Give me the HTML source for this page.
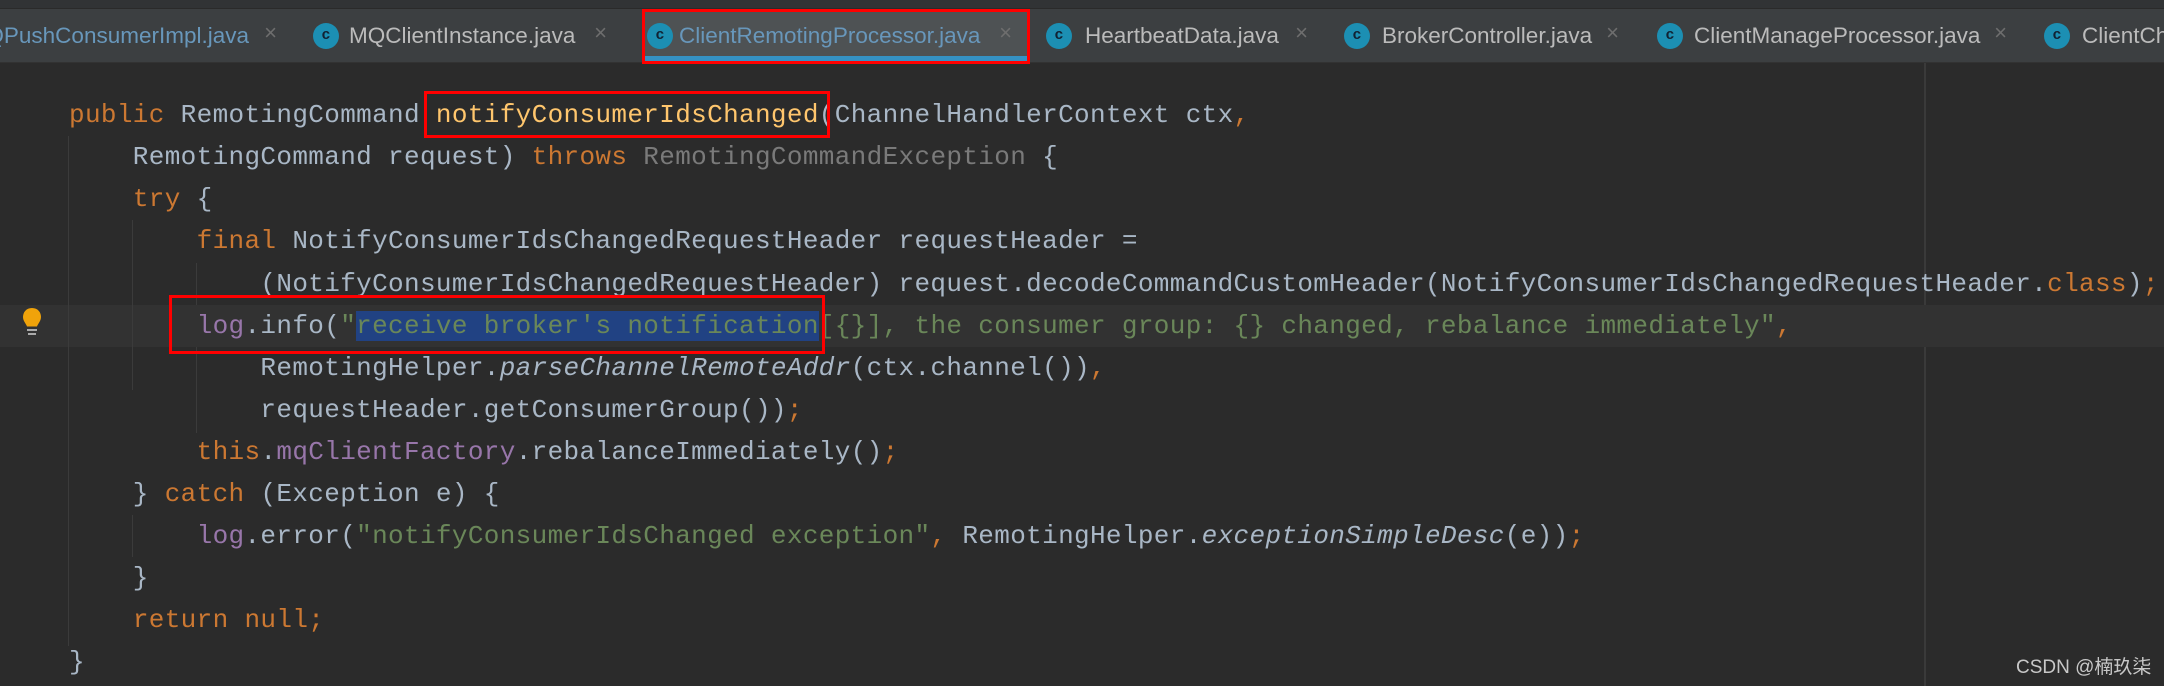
<!DOCTYPE html>
<html><head><meta charset="utf-8"><style>
html,body{margin:0;padding:0;}
body{width:2164px;height:686px;background:#2b2b2b;position:relative;overflow:hidden;font-family:"Liberation Mono",monospace;}
.top{position:absolute;left:0;top:0;width:2164px;height:8px;background:#313335;border-bottom:1px solid #2a2a2a;}
.tabs{position:absolute;left:0;top:9px;width:2164px;height:53px;background:#3c3f41;border-bottom:1px solid #323232;}
.tab{position:absolute;top:0;height:53px;font-family:"Liberation Sans",sans-serif;font-size:22.5px;color:#bbbbbb;line-height:53px;white-space:nowrap;}
.ic{position:absolute;top:14px;width:26px;height:26px;border-radius:50%;background:#1c8fb3;color:#123;font-size:15px;line-height:26px;text-align:center;font-weight:bold;}
.x{position:absolute;color:#6e6e6e;font-size:22px;}
.active{position:absolute;left:642px;top:9px;width:386px;height:53px;background:#4e5254;}
.uline{position:absolute;left:642px;top:56px;width:386px;height:6px;background:#3592c4;}
.line{position:absolute;left:69px;height:42px;line-height:42px;font-size:26px;letter-spacing:0.35px;color:#a9b7c6;white-space:pre;}
.k{color:#cc7832}.m{color:#ffc66d}.s{color:#6a8759}.f{color:#9876aa}.g{color:#7a7a7a}.i{font-style:italic}
.sel{background:#214283}
.cur{position:absolute;left:0;top:305px;width:2164px;height:42px;background:#323232;}
.red{position:absolute;border:3px solid #ff0000;box-sizing:border-box;}
.guide{position:absolute;width:1px;background:#3b3b3b;}
.margin{position:absolute;left:1924px;top:63px;width:2px;height:623px;background:#3a3a3a;}
.wm{position:absolute;left:2016px;top:652px;font-family:"Liberation Sans","Noto Sans CJK SC",sans-serif;font-size:19px;color:#c8c8c8;}
</style></head><body>
<div class="top"></div>
<div class="tabs"></div>
<div class="active"></div>
<div class="uline"></div>
<div class="tab" style="left:-100px;width:349px;text-align:right;top:9px;color:#6897bb">QPushConsumerImpl.java</div>
<div class="x" style="left:264px;top:22px">×</div>
<div class="ic" style="left:313px;top:23px">c</div>
<div class="tab" style="left:349px;top:9px">MQClientInstance.java</div>
<div class="x" style="left:594px;top:22px">×</div>
<div class="ic" style="left:647px;top:23px">c</div>
<div class="tab" style="left:679px;top:9px;color:#6897bb">ClientRemotingProcessor.java</div>
<div class="x" style="left:999px;top:22px">×</div>
<div class="ic" style="left:1046px;top:23px">c</div>
<div class="tab" style="left:1085px;top:9px">HeartbeatData.java</div>
<div class="x" style="left:1295px;top:22px">×</div>
<div class="ic" style="left:1344px;top:23px">c</div>
<div class="tab" style="left:1382px;top:9px">BrokerController.java</div>
<div class="x" style="left:1606px;top:22px">×</div>
<div class="ic" style="left:1657px;top:23px">c</div>
<div class="tab" style="left:1694px;top:9px">ClientManageProcessor.java</div>
<div class="x" style="left:1994px;top:22px">×</div>
<div class="ic" style="left:2044px;top:23px">c</div>
<div class="tab" style="left:2082px;top:9px">ClientCh</div>

<div class="margin"></div>
<div class="cur"></div>
<div class="guide" style="left:68px;top:136px;height:510px"></div>
<div class="guide" style="left:132px;top:220px;height:170px"></div>
<div class="guide" style="left:132px;top:515px;height:42px"></div>
<div class="guide" style="left:196px;top:263px;height:42px"></div>
<div class="guide" style="left:196px;top:347px;height:86px"></div>

<div class="line" style="top:94px"><span class="k">public </span>RemotingCommand <span class="m">notifyConsumerIdsChanged</span>(ChannelHandlerContext ctx<span class="k">,</span></div>
<div class="line" style="top:136px">    RemotingCommand request) <span class="k">throws </span><span class="g">RemotingCommandException</span> {</div>
<div class="line" style="top:178px">    <span class="k">try </span>{</div>
<div class="line" style="top:220px">        <span class="k">final </span>NotifyConsumerIdsChangedRequestHeader requestHeader =</div>
<div class="line" style="top:263px">            (NotifyConsumerIdsChangedRequestHeader) request.decodeCommandCustomHeader(NotifyConsumerIdsChangedRequestHeader.<span class="k">class</span>)<span class="k">;</span></div>
<div class="line" style="top:305px">        <span class="f">log</span>.info(<span class="s">"<span class="sel">receive broker's notification</span>[{}], the consumer group: {} changed, rebalance immediately"</span><span class="k">,</span></div>
<div class="line" style="top:347px">            RemotingHelper.<span class="i">parseChannelRemoteAddr</span>(ctx.channel())<span class="k">,</span></div>
<div class="line" style="top:389px">            requestHeader.getConsumerGroup())<span class="k">;</span></div>
<div class="line" style="top:431px">        <span class="k">this</span>.<span class="f">mqClientFactory</span>.rebalanceImmediately()<span class="k">;</span></div>
<div class="line" style="top:473px">    } <span class="k">catch </span>(Exception e) {</div>
<div class="line" style="top:515px">        <span class="f">log</span>.error(<span class="s">"notifyConsumerIdsChanged exception"</span><span class="k">, </span>RemotingHelper.<span class="i">exceptionSimpleDesc</span>(e))<span class="k">;</span></div>
<div class="line" style="top:557px">    }</div>
<div class="line" style="top:599px">    <span class="k">return null;</span></div>
<div class="line" style="top:641px">}</div>

<svg style="position:absolute;left:20px;top:306px" width="24" height="36" viewBox="0 0 24 36">
<path d="M12 2C6 2 3 6.5 3 11c0 4 3 6.5 4 9.5h10c1-3 4-5.5 4-9.5C21 6.5 18 2 12 2z" fill="#f0a30a"/>
<rect x="7" y="23" width="10" height="2" fill="#aaa"/><rect x="8" y="27" width="8" height="2" fill="#aaa"/>
</svg>

<div class="red" style="left:642px;top:9px;width:388px;height:55px"></div>
<div class="red" style="left:424px;top:91px;width:406px;height:47px"></div>
<div class="red" style="left:169px;top:295px;width:656px;height:59px"></div>

<div class="wm">CSDN @楠玖柒</div>
</body></html>
